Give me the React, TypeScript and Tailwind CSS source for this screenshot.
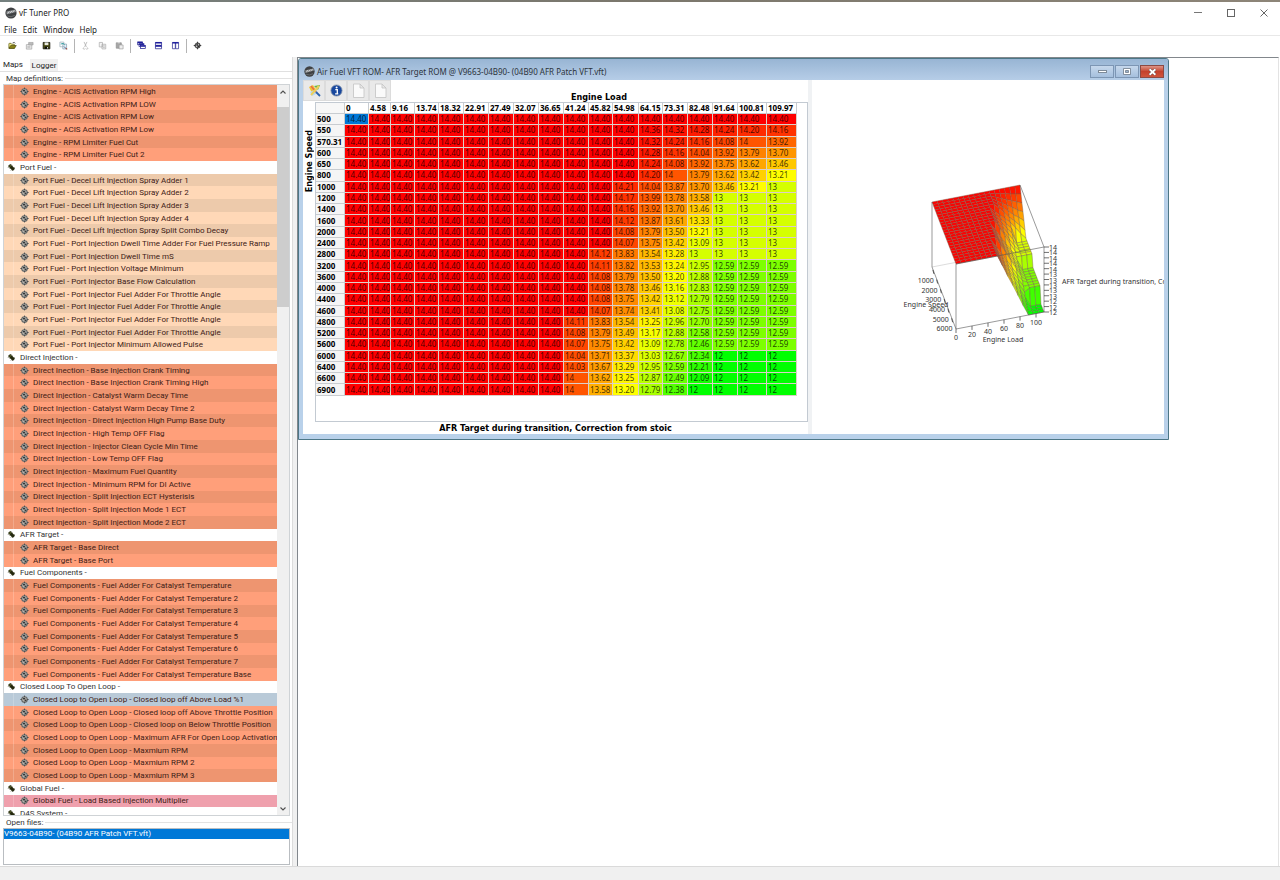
import { Fragment, useState, type ReactNode } from "react";

type Tone = "salmon" | "peach" | "pink";

interface Group {
  name: string;
  tone: Tone;
  maps: string[];
}

const groups: Group[] = [
  {
    name: "",
    tone: "salmon",
    maps: [
      "Engine - ACIS Activation RPM High",
      "Engine - ACIS Activation RPM LOW",
      "Engine - ACIS Activation RPM Low",
      "Engine - ACIS Activation RPM Low",
      "Engine - RPM Limiter Fuel Cut",
      "Engine - RPM Limiter Fuel Cut 2",
    ],
  },
  {
    name: "Port Fuel -",
    tone: "peach",
    maps: [
      "Port Fuel - Decel Lift Injection Spray Adder 1",
      "Port Fuel - Decel Lift Injection Spray Adder 2",
      "Port Fuel - Decel Lift Injection Spray Adder 3",
      "Port Fuel - Decel Lift Injection Spray Adder 4",
      "Port Fuel - Decel Lift Injection Spray Split Combo Decay",
      "Port Fuel - Port Injection Dwell Time Adder For Fuel Pressure Ramp",
      "Port Fuel - Port Injection Dwell Time mS",
      "Port Fuel - Port Injection Voltage Minimum",
      "Port Fuel - Port Injector Base Flow Calculation",
      "Port Fuel - Port Injector Fuel Adder For Throttle Angle",
      "Port Fuel - Port Injector Fuel Adder For Throttle Angle",
      "Port Fuel - Port Injector Fuel Adder For Throttle Angle",
      "Port Fuel - Port Injector Fuel Adder For Throttle Angle",
      "Port Fuel - Port Injector Minimum Allowed Pulse",
    ],
  },
  {
    name: "Direct Injection -",
    tone: "salmon",
    maps: [
      "Direct Inection - Base Injection Crank Timing",
      "Direct Inection - Base Injection Crank Timing High",
      "Direct Injection - Catalyst Warm Decay Time",
      "Direct Injection - Catalyst Warm Decay Time 2",
      "Direct Injection - Direct Injection High Pump Base Duty",
      "Direct Injection - High Temp OFF Flag",
      "Direct Injection - Injector Clean Cycle Min Time",
      "Direct Injection - Low Temp OFF Flag",
      "Direct Injection - Maximum Fuel Quantity",
      "Direct Injection - Minimum RPM for DI Active",
      "Direct Injection - Split Injection ECT Hysterisis",
      "Direct Injection - Split Injection Mode 1 ECT",
      "Direct Injection - Split Injection Mode 2 ECT",
    ],
  },
  {
    name: "AFR Target -",
    tone: "salmon",
    maps: ["AFR Target - Base Direct", "AFR Target - Base Port"],
  },
  {
    name: "Fuel Components -",
    tone: "salmon",
    maps: [
      "Fuel Components - Fuel Adder For Catalyst Temperature",
      "Fuel Components - Fuel Adder For Catalyst Temperature 2",
      "Fuel Components - Fuel Adder For Catalyst Temperature 3",
      "Fuel Components - Fuel Adder For Catalyst Temperature 4",
      "Fuel Components - Fuel Adder For Catalyst Temperature 5",
      "Fuel Components - Fuel Adder For Catalyst Temperature 6",
      "Fuel Components - Fuel Adder For Catalyst Temperature 7",
      "Fuel Components - Fuel Adder For Catalyst Temperature Base",
    ],
  },
  {
    name: "Closed Loop To Open Loop -",
    tone: "salmon",
    maps: [
      "Closed Loop to Open Loop - Closed loop off Above Load %1",
      "Closed Loop to Open Loop - Closed loop off Above Throttle Position",
      "Closed Loop to Open Loop - Closed loop on Below Throttle Position",
      "Closed Loop to Open Loop - Maximum AFR For Open Loop Activation",
      "Closed Loop to Open Loop - Maxmium RPM",
      "Closed Loop to Open Loop - Maxmium RPM 2",
      "Closed Loop to Open Loop - Maxmium RPM 3",
    ],
  },
  { name: "Global Fuel -", tone: "pink", maps: ["Global Fuel - Load Based Injection Multiplier"] },
  { name: "D4S System -", tone: "salmon", maps: [] },
];

const toneClasses: Record<Tone, [string, string]> = {
  salmon: ["bg-[#ee9570]", "bg-[#ff9f7a]"],
  peach: ["bg-[#edcaab]", "bg-[#ffd8b7]"],
  pink: ["bg-[#efa0ad]", "bg-[#ffb0bc]"],
};

const loads = [0, 4.58, 9.16, 13.74, 18.32, 22.91, 27.49, 32.07, 36.65, 41.24, 45.82, 54.98, 64.15, 73.31, 82.48, 91.64, 100.81, 109.97];

// every row reads 14.40 up to 36.65 load, only the last nine columns differ
const tail: [number, number[]][] = [
  [500, [14.4, 14.4, 14.4, 14.4, 14.4, 14.4, 14.4, 14.4, 14.4]],
  [550, [14.4, 14.4, 14.4, 14.36, 14.32, 14.28, 14.24, 14.2, 14.16]],
  [570.31, [14.4, 14.4, 14.4, 14.32, 14.24, 14.16, 14.08, 14, 13.92]],
  [600, [14.4, 14.4, 14.4, 14.28, 14.16, 14.04, 13.92, 13.79, 13.7]],
  [650, [14.4, 14.4, 14.4, 14.24, 14.08, 13.92, 13.75, 13.62, 13.46]],
  [800, [14.4, 14.4, 14.4, 14.2, 14, 13.79, 13.62, 13.42, 13.21]],
  [1000, [14.4, 14.4, 14.21, 14.04, 13.87, 13.7, 13.46, 13.21, 13]],
  [1200, [14.4, 14.4, 14.17, 13.99, 13.78, 13.58, 13, 13, 13]],
  [1400, [14.4, 14.4, 14.16, 13.92, 13.7, 13.46, 13, 13, 13]],
  [1600, [14.4, 14.4, 14.12, 13.87, 13.61, 13.33, 13, 13, 13]],
  [2000, [14.4, 14.4, 14.08, 13.79, 13.5, 13.21, 13, 13, 13]],
  [2400, [14.4, 14.4, 14.07, 13.75, 13.42, 13.09, 13, 13, 13]],
  [2800, [14.4, 14.12, 13.83, 13.54, 13.28, 13, 13, 13, 13]],
  [3200, [14.4, 14.11, 13.82, 13.53, 13.24, 12.95, 12.59, 12.59, 12.59]],
  [3600, [14.4, 14.08, 13.79, 13.5, 13.2, 12.88, 12.59, 12.59, 12.59]],
  [4000, [14.4, 14.08, 13.78, 13.46, 13.16, 12.83, 12.59, 12.59, 12.59]],
  [4400, [14.4, 14.08, 13.75, 13.42, 13.12, 12.79, 12.59, 12.59, 12.59]],
  [4600, [14.4, 14.07, 13.74, 13.41, 13.08, 12.75, 12.59, 12.59, 12.59]],
  [4800, [14.11, 13.83, 13.54, 13.25, 12.96, 12.7, 12.59, 12.59, 12.59]],
  [5200, [14.08, 13.79, 13.49, 13.17, 12.88, 12.58, 12.59, 12.59, 12.59]],
  [5600, [14.07, 13.75, 13.42, 13.09, 12.78, 12.46, 12.59, 12.59, 12.59]],
  [6000, [14.04, 13.71, 13.37, 13.03, 12.67, 12.34, 12, 12, 12]],
  [6400, [14.03, 13.67, 13.29, 12.95, 12.59, 12.21, 12, 12, 12]],
  [6600, [14, 13.62, 13.25, 12.87, 12.49, 12.09, 12, 12, 12]],
  [6900, [14, 13.58, 13.2, 12.79, 12.38, 12, 12, 12, 12]],
];

const table = tail.map(([speed, values]) => ({
  speed,
  values: [...Array<number>(9).fill(14.4), ...values],
}));

const format = (n: number) => (Number.isInteger(n) ? String(n) : n.toFixed(2));

// green at 12, yellow at 13.2, red at 14.4
function heat(value: number) {
  const t = (value - 12) / 1.2;
  const red = Math.round(Math.min(1, t) * 255);
  const green = Math.round(Math.min(1, 2 - t) * 255);
  return `rgb(${red},${green},0)`;
}

function RoundLogo({ className }: { className: string }) {
  return (
    <svg viewBox="0 0 12 12" className={className} aria-hidden="true">
      <circle cx="6" cy="6" r="5.6" fill="#3f4143" />
      <path d="M1.5 4.6 L10.4 2.6 L10.9 5 L1.6 7.6Z" fill="#8f9295" />
      <path d="M2.6 6.2 L4.4 4.6 M5 5.8 L7 4 M7.4 5.2 L9.4 3.5" stroke="#e5e7e8" strokeWidth=".8" />
      <path d="M2.4 9 Q6 10.8 9.8 8.4" stroke="#75787b" fill="none" strokeWidth=".8" />
    </svg>
  );
}

function TargetIcon() {
  return (
    <svg viewBox="0 0 9 9" className="size-[9px] shrink-0" aria-hidden="true">
      <circle cx="4.5" cy="4.5" r="2.8" fill="#b9b6b0" stroke="#666a6a" strokeWidth="1.1" />
      <path d="M4.5 0.6V2.2M4.5 6.8V8.4M0.4 4.5H2M7 4.5H8.6" stroke="#4c5052" strokeWidth="1" />
      <path d="M3 3H5.2V4.4H3Z" fill="#34383a" />
      <path d="M4.6 4.6H6.4V6.2H4.6Z" fill="#34383a" />
    </svg>
  );
}

function ChipIcon() {
  return (
    <svg viewBox="0 0 9 9" className="size-[9px] shrink-0" aria-hidden="true">
      <path d="M1 3.1 L3.2 1 L8 5.8 L5.8 8Z" fill="#24280f" />
      <path d="M1.2 4.6l.9-.9M2.6 6l.9-.9M4 7.4l.9-.9M4.2 1.3l-.8.8M5.8 2.8l-.9.9M7.4 4.3l-.9.9" stroke="#3c4220" strokeWidth=".8" />
      <circle cx="3.1" cy="2.9" r=".6" fill="#8b9a3d" />
    </svg>
  );
}

const toolIcons: { label: string; art: ReactNode; gapBefore?: boolean }[] = [
  {
    label: "Open",
    art: (
      <>
        <path d="M1 3V8H7V3.6H4L3.4 2.6H1.4Z" fill="#f5ee8c" stroke="#5d5a10" strokeWidth=".8" />
        <path d="M1 8.2 L3 5 H9.2 L7.2 8.2Z" fill="#8a8416" stroke="#45430c" strokeWidth=".7" />
        <path d="M5.2 2 Q7 .6 8.2 2.6" fill="none" stroke="#222" strokeWidth=".7" />
      </>
    ),
  },
  {
    label: "Properties",
    art: (
      <>
        <path d="M1.5 4H7.5V9H1.5Z" fill="#eee" stroke="#a5a5a5" strokeWidth=".8" />
        <path d="M4 1.6H9V4.4H4Z" fill="#bbb" stroke="#999" strokeWidth=".6" />
        <path d="M2.6 6H6M2.6 7.4H6" stroke="#aaa" strokeWidth=".7" />
      </>
    ),
  },
  {
    label: "Save",
    art: (
      <>
        <path d="M1.3 1.6H8.7V8.7H1.3Z" fill="#4b4d12" stroke="#15150a" strokeWidth=".9" />
        <path d="M2.9 1.6H7.1V4.6H2.9Z" fill="#e9e9e2" />
        <path d="M3.1 6.2H7V8.7H3.1Z" fill="#0c0c0c" />
        <path d="M5.6 6.8H6.5V8.3H5.6Z" fill="#fff" />
      </>
    ),
  },
  {
    label: "Refresh",
    art: (
      <>
        <path d="M1 1.2H5.4V6.4H1Z" fill="#fff" stroke="#8fa1ad" strokeWidth=".7" />
        <path d="M4.2 3.4H8.4V8.8H4.2Z" fill="#e6eef5" stroke="#7d96aa" strokeWidth=".7" />
        <path d="M2 3.4 Q4.8 1.4 6.4 4.4" fill="none" stroke="#23989a" strokeWidth="1" />
        <path d="M5.4 6L8.6 9.2" stroke="#3c5f8c" strokeWidth="1" />
        <circle cx="8.4" cy="8.6" r=".8" fill="#b0503c" />
      </>
    ),
  },
  {
    label: "Cut",
    gapBefore: true,
    art: (
      <path d="M3.4 1L6 6.6M6.6 1L4 6.6M3 7.2a1 1 0 1 0 1.4 1.2M7 7.2a1 1 0 1 1-1.4 1.2" fill="none" stroke="#a8a8a8" strokeWidth=".8" />
    ),
  },
  {
    label: "Copy",
    art: (
      <path d="M1.4 1.6H5V6.6H1.4ZM4.4 3.6H8.6V8.8H4.4ZM5.4 5.4H7.6M5.4 7H7.6" fill="#f4f4f4" stroke="#adadad" strokeWidth=".8" />
    ),
  },
  {
    label: "Paste",
    art: (
      <>
        <path d="M1.4 2H7V8H1.4Z" fill="#a6a6a6" stroke="#909090" strokeWidth=".8" />
        <path d="M3 1.2H5.4V2.6H3Z" fill="#ddd" />
        <path d="M4.6 4.4H9V8.8H4.6Z" fill="#eee" stroke="#999" strokeWidth=".7" />
      </>
    ),
  },
  {
    label: "Cascade",
    gapBefore: true,
    art: (
      <>
        {[0, 2, 4].map((n) => (
          <Fragment key={n}>
            <rect x={0.8 + n * 0.75} y={1 + n} width="5.4" height="3.2" fill="#fff" stroke="#1c1c8c" strokeWidth=".8" />
            <rect x={0.8 + n * 0.75} y={1 + n} width="5.4" height="1.4" fill="#1c1c9c" />
          </Fragment>
        ))}
      </>
    ),
  },
  {
    label: "Tile horizontally",
    art: (
      <>
        <path d="M1.6 1.6H8.4V4.8H1.6ZM1.6 5.2H8.4V8.6H1.6Z" fill="#fff" stroke="#1c1c8c" strokeWidth=".8" />
        <path d="M1.6 1.2H8.4V2.8H1.6ZM1.6 4.8H8.4V6.4H1.6Z" fill="#1c1c9c" />
      </>
    ),
  },
  {
    label: "Tile vertically",
    art: (
      <>
        <path d="M1.6 1.6H4.8V8.6H1.6ZM5.2 1.6H8.4V8.6H5.2Z" fill="#fff" stroke="#2c2c94" strokeWidth=".8" />
        <path d="M1.6 1.2H8.4V2.8H1.6Z" fill="#1c1c9c" />
      </>
    ),
  },
  {
    label: "Target",
    gapBefore: true,
    art: (
      <>
        <circle cx="5" cy="5" r="2.7" fill="#bbb" stroke="#444" strokeWidth="1.2" />
        <path d="M5 .8V3M5 7V9.2M.8 5H3M7 5H9.2" stroke="#333" strokeWidth="1" />
        <path d="M3.6 3.6H5.6V5H3.6ZM5 5H6.6V6.6H5Z" fill="#222" />
      </>
    ),
  },
];

function TitleBar() {
  return (
    <header className="flex h-[21px] shrink-0 items-center bg-white pl-[5px] text-[#222]">
      <RoundLogo className="size-[12px]" />
      <h1 className="ml-[2px] flex-1 font-['Noto_Sans',sans-serif]">vF Tuner PRO</h1>
      <button aria-label="Minimize" className="flex h-full w-[33px] items-center justify-center">
        <span className="h-px w-[8px] bg-[#777]" />
      </button>
      <button aria-label="Maximize" className="flex h-full w-[33px] items-center justify-center">
        <span className="size-[8px] border border-[#666]" />
      </button>
      <button aria-label="Close" className="flex h-full w-[33px] items-center justify-center">
        <svg viewBox="0 0 8 8" className="size-[8px]">
          <path d="M.5.5l7 7M7.5.5l-7 7" stroke="#555" strokeWidth=".9" />
        </svg>
      </button>
    </header>
  );
}

function Toolbar() {
  return (
    <div className="flex h-[22px] shrink-0 items-center border-t border-[#e8e8e8] bg-white pb-[2px] pl-[4px]">
      {toolIcons.map((tool) => (
        <Fragment key={tool.label}>
          {tool.gapBefore && <span className="mx-[2px] h-[14px] w-px bg-[#b4b4b4]" />}
          <button aria-label={tool.label} title={tool.label} className="flex h-[17px] w-[17px] items-center justify-center">
            <svg viewBox="0 0 10 10" className="size-[9px]">{tool.art}</svg>
          </button>
        </Fragment>
      ))}
    </div>
  );
}

function MapTree() {
  const [selected, setSelected] = useState("Closed Loop to Open Loop - Closed loop off Above Load %1");

  return (
    <div className="mr-[2px] ml-[3px] flex min-h-0 flex-1 overflow-hidden border border-[#cfd3d6] bg-white">
      <ul className="grid h-[735px] min-w-0 flex-1 auto-rows-fr">
        {groups.map((group, g) => (
          <Fragment key={g}>
            {group.name && (
              <li className="flex min-h-0 items-center gap-[4px] pl-[3px] text-[#333]">
                <ChipIcon />
                {group.name}
              </li>
            )}
            {group.maps.map((name, i) => (
              <li key={i} className={`min-h-0 ${selected === name ? "bg-[#b9cad8]" : toneClasses[group.tone][i % 2]}`}>
                <button
                  onClick={() => setSelected(name)}
                  className="flex h-full w-full items-center whitespace-nowrap pl-[9px] text-left text-[#402016]"
                >
                  <span className="h-full w-[7px] border-l border-white/20" />
                  <TargetIcon />
                  <span className="ml-[4px]">{name}</span>
                </button>
              </li>
            ))}
          </Fragment>
        ))}
      </ul>
      <div className="flex w-[12px] shrink-0 flex-col bg-[#f0f0f0]">
        <button aria-label="Scroll up" className="flex h-[22px] items-center justify-center pb-[8px]">
          <svg viewBox="0 0 6 4" className="h-[4px] w-[6px]">
            <path d="M.5 3.5L3 1l2.5 2.5" fill="none" stroke="#505050" strokeWidth="1.1" />
          </svg>
        </button>
        <div className="h-[200px] bg-[#cdcdcd]" />
        <div className="flex-1" />
        <button aria-label="Scroll down" className="flex h-[12px] items-center justify-center">
          <svg viewBox="0 0 6 4" className="h-[4px] w-[6px]">
            <path d="M.5.5L3 3 5.5.5" fill="none" stroke="#505050" strokeWidth="1.1" />
          </svg>
        </button>
      </div>
    </div>
  );
}

function Caption({ children }: { children: ReactNode }) {
  return (
    <h2 className="flex h-[12px] shrink-0 items-center gap-[2px] pl-[6px] text-[#333]">
      {children}
      <span className="h-px flex-1 bg-[#e2e2e2]" />
    </h2>
  );
}

function Sidebar() {
  return (
    <aside className="flex w-[293px] shrink-0 flex-col border-r border-[#dcdcdc] bg-white font-[Roboto,sans-serif]">
      <div role="tablist" className="flex h-[14px] shrink-0 items-stretch text-[#222]">
        <button role="tab" aria-selected="true" className="w-[30px] bg-white pr-[4px]">Maps</button>
        <button role="tab" aria-selected="false" className="mt-[2px] w-[28px] bg-[#f0f0f0]">Logger</button>
      </div>
      <div className="flex min-h-0 flex-1 flex-col border-t border-[#e0e0e0]">
        <Caption>Map definitions:</Caption>
        <MapTree />
        <Caption>Open files:</Caption>
        <ul className="mr-[2px] ml-[3px] mb-px h-[37px] shrink-0 border border-[#b9bdc1] bg-white">
          <li>
            <button className="block h-[10px] w-full bg-[#0078d7] text-left leading-[10px] text-white">
              V9663-04B90- (04B90 AFR Patch VFT.vft)
            </button>
          </li>
        </ul>
      </div>
    </aside>
  );
}

function MapTable() {
  return (
    <table className="h-[293px] w-[481px] table-fixed border-separate border-spacing-0 font-['Noto_Sans',sans-serif] text-[8px] leading-[10px]">
      <colgroup>
        <col className="w-[29px]" />
        <col className="w-[24px]" />
        <col className="w-[22px]" />
        <col className="w-[24px]" />
        <col className="w-[24px]" />
        <col className="w-[25px]" />
        <col className="w-[25px]" />
        <col className="w-[25px]" />
        <col className="w-[25px]" />
        <col className="w-[25px]" />
        <col className="w-[25px]" />
        <col className="w-[24px]" />
        <col className="w-[26px]" />
        <col className="w-[24px]" />
        <col className="w-[25px]" />
        <col className="w-[25px]" />
        <col className="w-[25px]" />
        <col className="w-[29px]" />
        <col className="w-[30px]" />
      </colgroup>
      <thead>
        <tr>
          <th className="border-r border-b border-[#c8ccd0] bg-[#f7f7f7] p-0" />
          {loads.map((load) => (
            <th key={load} scope="col" className="border-r border-b border-[#c8ccd0] bg-white p-0 pl-px text-left font-bold text-black">
              {load}
            </th>
          ))}
        </tr>
      </thead>
      <tbody>
        {table.map((row, r) => (
          <tr key={row.speed}>
            <th scope="row" className="border-r border-b border-[#c8ccd0] bg-[#f5f5f5] p-0 pl-px text-left font-bold text-black">
              {row.speed}
            </th>
            {row.values.map((value, c) => (
              <td
                key={c}
                className="border-r border-b border-[#dccfc8] p-0 pl-px text-black/75"
                style={{ backgroundColor: r === 0 && c === 0 ? "#0078d7" : heat(value) }}
              >
                {format(value)}
              </td>
            ))}
          </tr>
        ))}
      </tbody>
    </table>
  );
}

// u runs along load, v along speed (both 0 to 1), value drops from 14.4 to 12
function project(u: number, v: number, value: number) {
  const w = (14.4 - value) / 2.4;
  return [932 + u * 88 + v * 24, 202 - u * 17 + v * 62 + w * 65];
}

function line(a: number[], b: number[]) {
  return `M${a[0]} ${a[1]}L${b[0]} ${b[1]}`;
}

function SurfaceChart() {
  const quads: { d: string; fill: string }[] = [];
  const lastRow = table.length - 1;
  const lastCol = loads.length - 1;
  // cells are spread evenly over the floor, whatever the axis steps are
  const at = (r: number, c: number) => project(c / lastCol, r / lastRow, table[r].values[c]);
  for (let r = 0; r < lastRow; r++) {
    for (let c = 0; c < lastCol; c++) {
      const corners = [at(r, c), at(r, c + 1), at(r + 1, c + 1), at(r + 1, c)];
      const far = table[r].values;
      const near = table[r + 1].values;
      const mean = (far[c] + far[c + 1] + near[c] + near[c + 1]) / 4;
      quads.push({ d: "M" + corners.map((p) => p.join(" ")).join("L") + "Z", fill: heat(mean) });
    }
  }

  const frame = [
    line(project(0, 0, 14.4), project(0, 0, 12)),
    line(project(0, 1, 14.4), project(0, 1, 12)),
    line(project(0, 1, 14.4), project(1, 1, 14.4)),
    line(project(1, 0, 14.4), project(1, 1, 14.4)),
    line(project(1, 1, 14.4), project(1, 1, 12)),
    line(project(0, 0, 12), project(0, 1, 12)),
    line(project(0, 1, 12), project(1, 1, 12)),
  ];
  const speedTicks = [1000, 2000, 3000, 4000, 5000, 6000];
  const loadTicks = [0, 20, 40, 60, 80, 100];
  const valueTicks = Array.from({ length: 13 }, (_, i) => 14.4 - i * 0.2);

  return (
    <svg viewBox="812 80 352 354" className="h-full w-full" role="img" aria-label="AFR Target during transition surface">
      <path d={line(project(0, 0, 12), project(0.27, 0, 12))} stroke="#c4c4c4" strokeWidth=".6" />
      {quads.map((q, i) => (
        <path key={i} d={q.d} fill={q.fill} stroke="#75604a" strokeOpacity=".8" strokeWidth=".5" />
      ))}
      <path d={frame.join("")} fill="none" stroke="#555" strokeWidth=".6" />
      <g fill="#333" className="font-['Noto_Sans',sans-serif] text-[7px]">
        {speedTicks.map((s) => {
          const [x, y] = project(0, (s - 500) / 6400, 12);
          return (
            <g key={s}>
              <path d={`M${x - 1} ${y - 2}l1 4`} stroke="#333" strokeWidth=".8" />
              <text x={x} y={y + 11} textAnchor="end">{s}</text>
            </g>
          );
        })}
        {loadTicks.map((l) => {
          const [x, y] = project(l / 109.97, 1, 12);
          return (
            <g key={l}>
              <path d={`M${x} ${y}v4`} stroke="#333" strokeWidth=".7" />
              <text x={x} y={y + 11} textAnchor="middle">{l}</text>
            </g>
          );
        })}
        {valueTicks.map((v, i) => {
          const [x, y] = project(1, 1, v);
          return (
            <g key={i}>
              <path d={`M${x} ${y}h5`} stroke="#333" strokeWidth=".7" />
              <text x={x + 5} y={y + 3}>{v.toFixed(0)}</text>
            </g>
          );
        })}
        <text x="926" y="307" textAnchor="middle">Engine Speed</text>
        <text x="1003" y="342" textAnchor="middle">Engine Load</text>
        <text x="1062" y="284">AFR Target during transition, Correction from stoic</text>
      </g>
    </svg>
  );
}

const chartTools: { label: string; art: ReactNode }[] = [
  {
    label: "Edit map",
    art: (
      <>
        <path d="M2 4L6 2 9 7 5 10Z" fill="#f2c230" />
        <path d="M7 3L13 2 11 7Z" fill="#6cb644" />
        <path d="M3 9L9 6 11 10 5 13Z" fill="#b9d7ee" />
        <path d="M4 3L9 9" stroke="#e8694c" strokeWidth="1.6" />
        <path d="M12 3L4 12" stroke="#ecd05a" strokeWidth="2" />
        <path d="M9 9L13 13" stroke="#2b62ad" strokeWidth="1.8" />
      </>
    ),
  },
  {
    label: "Info",
    art: (
      <>
        <circle cx="7.5" cy="7.5" r="5.6" fill="#17479e" stroke="#8e9aac" strokeWidth=".8" />
        <path d="M6.3 6.6H8.3V10.6M6.1 10.8H9.3" stroke="#fff" strokeWidth="1.3" fill="none" />
        <circle cx="7.6" cy="4.4" r="1" fill="#fff" />
      </>
    ),
  },
  {
    label: "New page",
    art: <path d="M2.5 1H9L13 5V14.5H2.5ZM9 1V5H13" fill="#fafafa" stroke="#c3c3c3" strokeWidth=".8" />,
  },
  {
    label: "Copy page",
    art: <path d="M2.5 1H9L13 5V14.5H2.5ZM9 1V5H13" fill="#fafafa" stroke="#c3c3c3" strokeWidth=".8" />,
  },
];

function MapWindow() {
  return (
    <section className="absolute top-0 left-0 flex h-[382px] w-[871px] flex-col rounded-t-[3px] border border-[#4d7787] bg-[#b9d1ea] px-[4px] pb-[5px]">
      <header className="-mx-[4px] flex h-[21px] shrink-0 items-center rounded-t-[2px] bg-linear-to-b from-[#98b5d4] to-[#b6cde7] pt-[4px] pl-[5px]">
        <RoundLogo className="size-[11px]" />
        <h2 className="ml-[2px] flex-1 font-['Noto_Sans',sans-serif] text-[#2c333b]">
          Air Fuel VFT ROM- AFR Target ROM @ V9663-04B90- (04B90 AFR Patch VFT.vft)
        </h2>
        <div className="flex gap-px pr-[4px]">
          <button aria-label="Minimize map" className="flex h-[13px] w-[24px] items-center justify-center border border-[#7d96b4] bg-linear-to-b from-[#c6d8ec] to-[#a5bfdd]">
            <span className="h-[3px] w-[9px] border border-[#7d8a98] bg-white" />
          </button>
          <button aria-label="Maximize map" className="flex h-[13px] w-[24px] items-center justify-center border border-[#7d96b4] bg-linear-to-b from-[#c6d8ec] to-[#a5bfdd]">
            <svg viewBox="0 0 8 7" className="h-[7px] w-[8px]">
              <path d="M.5.5H7.5V6.5H.5Z" fill="#fff" stroke="#6d7a88" strokeWidth=".8" />
              <path d="M2.5 2.5H5.5V4.5H2.5Z" fill="#9db4cf" stroke="#6d7a88" strokeWidth=".8" />
            </svg>
          </button>
          <button aria-label="Close map" className="flex h-[13px] w-[24px] items-center justify-center border border-[#8c4a44] bg-linear-to-b from-[#dd9488] via-[#c4412c] to-[#d0543c]">
            <svg viewBox="0 0 9 8" className="h-[8px] w-[9px]">
              <path d="M1.6 1.2l5.8 5.6M7.4 1.2L1.6 6.8" stroke="#5c3a3a" strokeWidth="2.8" />
              <path d="M1.6 1.2l5.8 5.6M7.4 1.2L1.6 6.8" stroke="#fff" strokeWidth="1.9" />
            </svg>
          </button>
        </div>
      </header>
      <div className="flex min-h-0 flex-1 bg-white">
        <div className="flex w-[505px] shrink-0 flex-col">
          <div className="flex h-[22px] shrink-0">
            <div className="flex">
              {chartTools.map((tool) => (
                <button
                  key={tool.label}
                  aria-label={tool.label}
                  className="flex h-[21px] w-[22px] items-center justify-center border border-[#dcdcdc] bg-[#e9e9e9]"
                >
                  <svg viewBox="0 0 15 15" className="size-[15px]">{tool.art}</svg>
                </button>
              ))}
            </div>
            <h3 className="flex-1 self-end pl-[180px] text-[9px] leading-[10px] font-bold text-black">Engine Load</h3>
          </div>
          <div className="flex min-h-0 flex-1">
            <div className="flex w-[12px] shrink-0 justify-center pt-[28px]">
              <h3 className="rotate-180 self-start text-[9px] leading-[11px] font-bold text-black [writing-mode:vertical-rl]">Engine Speed</h3>
            </div>
            <div className="flex-1 border border-[#c3cad2]">
              <MapTable />
            </div>
          </div>
          <h3 className="h-[12px] text-center text-[9px] leading-[12px] font-bold text-black">
            AFR Target during transition, Correction from stoic
          </h3>
        </div>
        <div className="w-[4px] shrink-0 bg-[#f0f2f4]" />
        <div className="min-w-0 flex-1 overflow-hidden">
          <SurfaceChart />
        </div>
      </div>
    </section>
  );
}

export default function App() {
  return (
    <div className="flex h-screen flex-col bg-white font-['DejaVu_Sans_Condensed','DejaVu_Sans',sans-serif] text-[8px] leading-[11px]">
      <div className="h-[2px] shrink-0 bg-linear-to-r from-[#74807f] via-[#7b776c] to-[#8d8578]" />
      <TitleBar />
      <nav className="flex h-[12px] shrink-0 items-center gap-[6px] bg-white pl-[4px] font-['Noto_Sans',sans-serif] text-[#222]">
        {["File", "Edit", "Window", "Help"].map((item) => (
          <button key={item}>{item}</button>
        ))}
      </nav>
      <Toolbar />
      <div className="flex min-h-0 flex-1">
        <Sidebar />
        <div className="w-[4px] shrink-0 bg-[#f0f0f0]" />
        <main className="relative mr-px flex-1 overflow-hidden border-t border-r border-l border-t-[#82878c] border-r-[#e3e3e3] border-l-[#82878c] bg-white">
          <MapWindow />
        </main>
      </div>
      <footer className="h-[14px] shrink-0 border-t border-[#dadada] bg-[#f0f0f0]" />
    </div>
  );
}
